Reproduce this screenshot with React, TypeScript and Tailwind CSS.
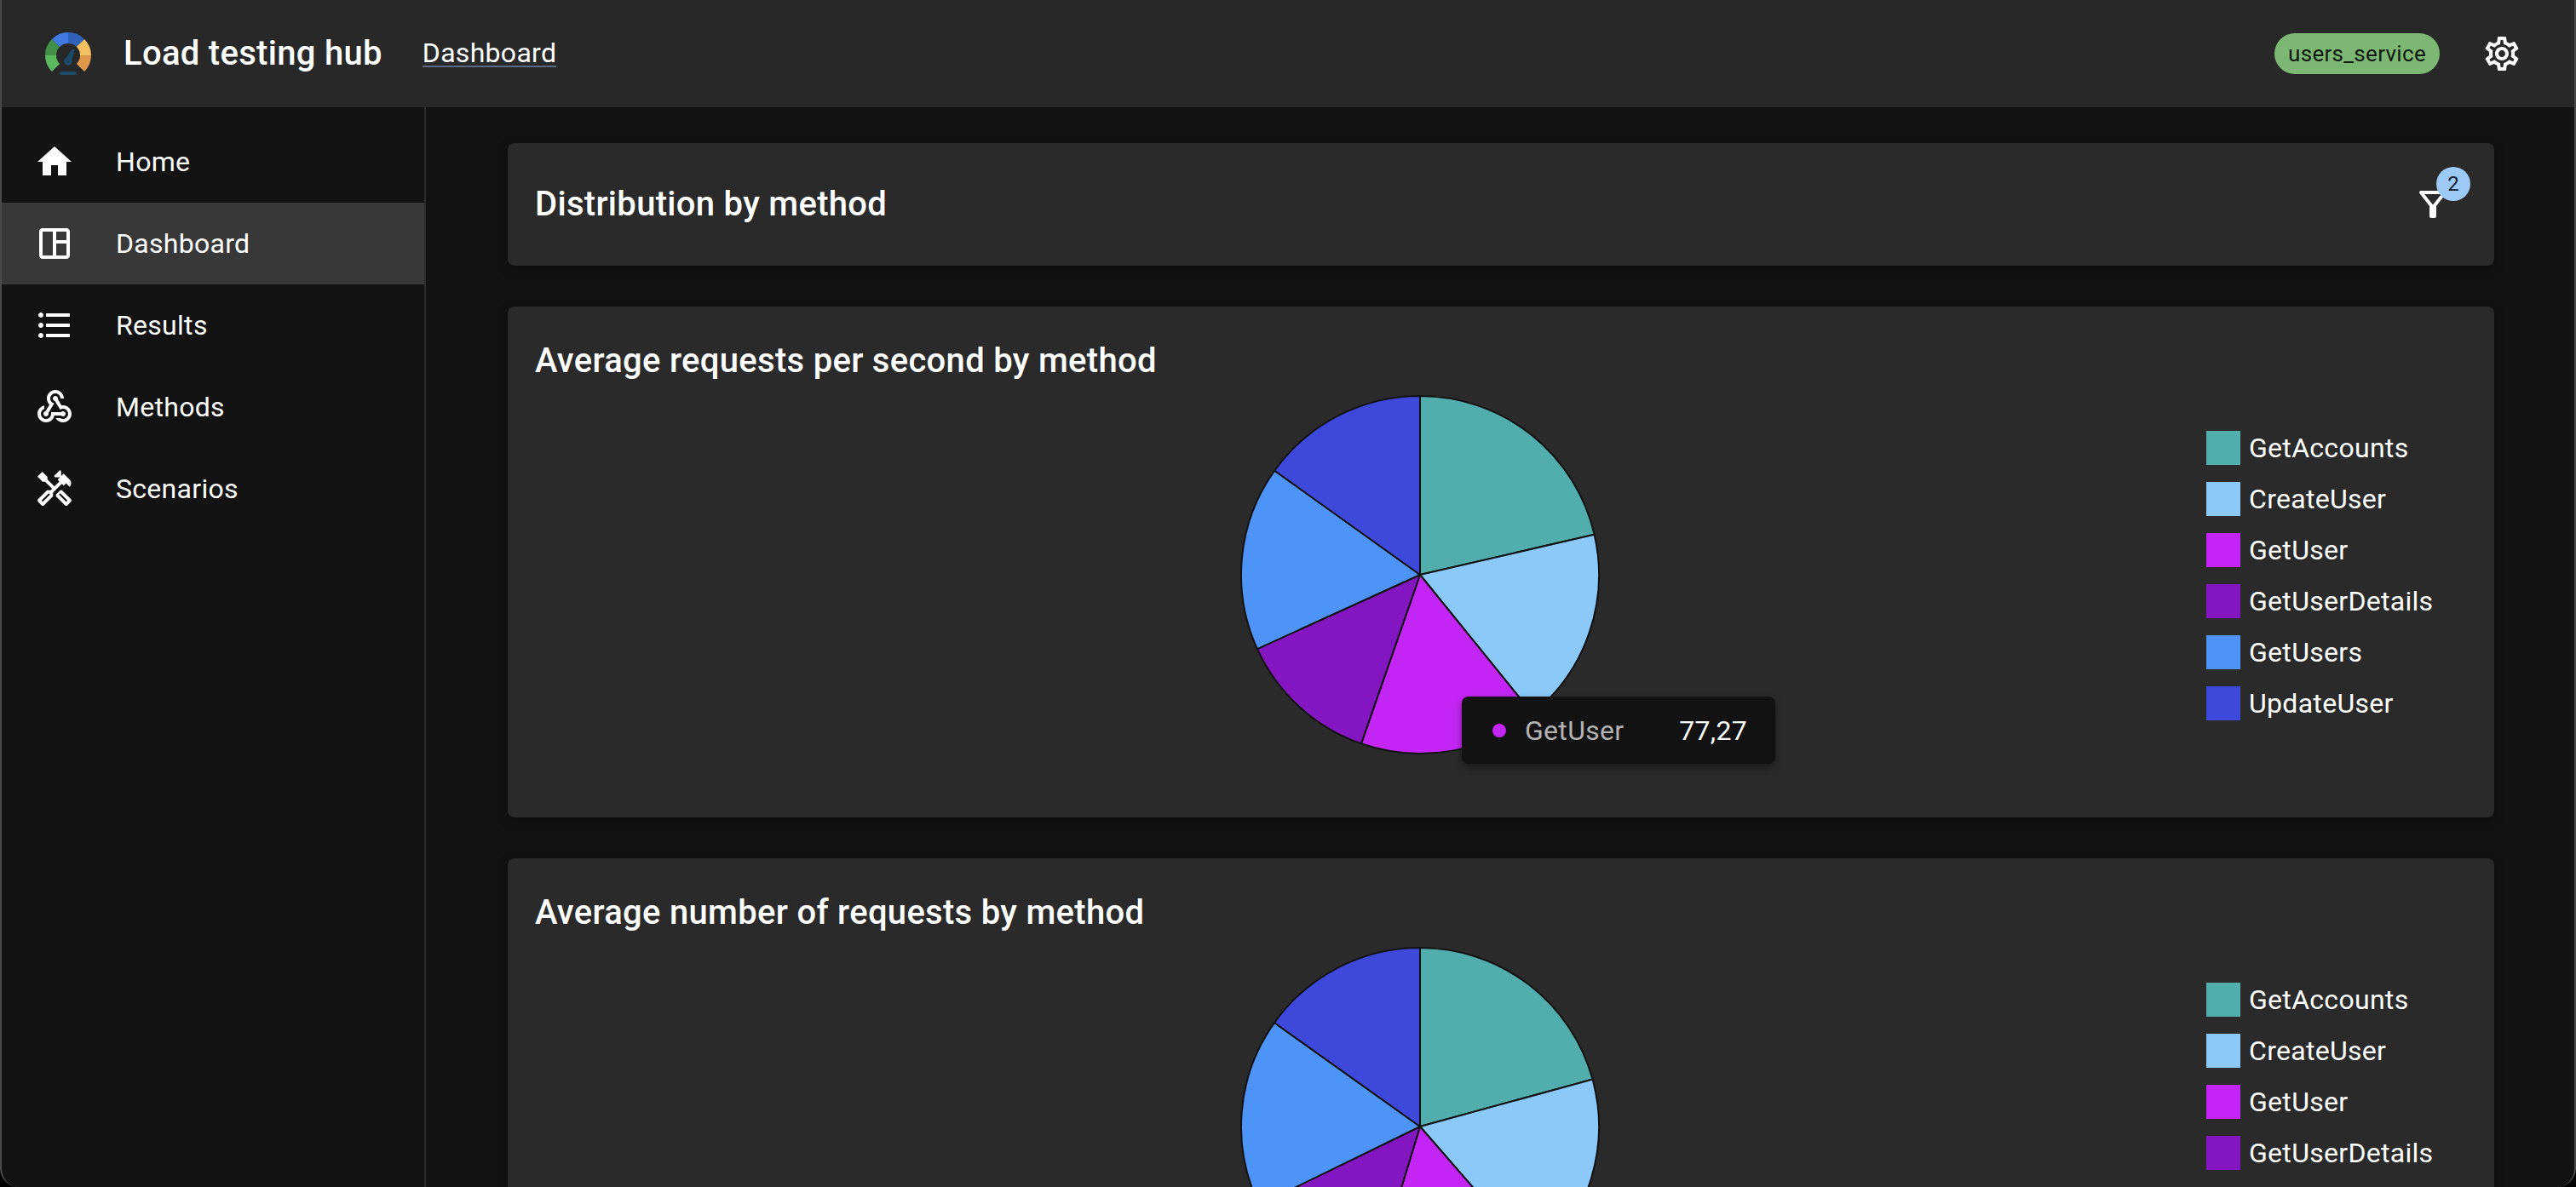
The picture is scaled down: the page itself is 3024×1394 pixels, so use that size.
import React from 'react';

const font = "font-['Roboto',sans-serif]";

const Icon: React.FC<{ d: string; className?: string }> = ({ d, className = 'w-12 h-12' }) => (
  <svg viewBox="0 0 24 24" fill="currentColor" className={`${className} shrink-0`}>
    <path d={d} />
  </svg>
);

const HOME = 'M10 20v-6h4v6h5v-8h3L12 3 2 12h3v8z';
const DASHBOARD =
  'M19 3H5c-1.1 0-2 .9-2 2v14c0 1.1.9 2 2 2h14c1.1 0 2-.9 2-2V5c0-1.1-.9-2-2-2zM5 19V5h6v14H5zm14 0h-6v-7h6v7zm0-9h-6V5h6v5z';
const LIST =
  'M4 10.5c-.83 0-1.5.67-1.5 1.5s.67 1.5 1.5 1.5 1.5-.67 1.5-1.5-.67-1.5-1.5-1.5zm0-6c-.83 0-1.5.67-1.5 1.5S3.17 7.5 4 7.5 5.5 6.83 5.5 6 4.83 4.5 4 4.5zm0 12c-.83 0-1.5.68-1.5 1.5s.68 1.5 1.5 1.5 1.5-.68 1.5-1.5-.67-1.5-1.5-1.5zM7 19h14v-2H7v2zm0-6h14v-2H7v2zm0-8v2h14V5H7z';
const WEBHOOK =
  'M10 15h5.88c.27-.31.67-.5 1.12-.5.83 0 1.5.67 1.5 1.5s-.67 1.5-1.5 1.5c-.44 0-.84-.19-1.12-.5H11.9c-.46 2.28-2.48 4-4.9 4-2.76 0-5-2.24-5-5 0-2.42 1.72-4.44 4-4.9v2.07c-1.16.41-2 1.53-2 2.83 0 1.65 1.35 3 3 3s3-1.35 3-3v-1zm2.5-11c1.65 0 3 1.35 3 3h2c0-2.76-2.24-5-5-5s-5 2.24-5 5c0 1.43.6 2.71 1.55 3.62l-2.35 3.9c-.68.14-1.2.75-1.2 1.48 0 .83.67 1.5 1.5 1.5s1.5-.67 1.5-1.5c0-.16-.02-.31-.07-.45l3.38-5.63C10.49 9.61 9.5 8.42 9.5 7c0-1.65 1.35-3 3-3zm4.5 9c-.64 0-1.23.2-1.72.54l-3.05-5.07C11.53 8.35 11 7.74 11 7c0-.83.67-1.5 1.5-1.5S14 6.17 14 7c0 .15-.02.29-.06.43l2.19 3.65c.28-.05.57-.08.87-.08 2.76 0 5 2.24 5 5s-2.24 5-5 5c-1.85 0-3.47-1.01-4.33-2.5h2.67c.48.32 1.05.5 1.66.5 1.65 0 3-1.35 3-3s-1.35-3-3-3z';
const CONSTRUCTION =
  'm21.67 18.17-5.3-5.3h-.99l-2.54 2.54v.99l5.3 5.3c.39.39 1.02.39 1.41 0l2.12-2.12c.39-.38.39-1.02 0-1.41zm-2.83 1.42-4.24-4.24.71-.71 4.24 4.24-.71.71zM17.34 10.19l1.41-1.41 2.12 2.12c1.17-1.17 1.17-3.07 0-4.24l-3.54-3.54-1.41 1.41V1.71l-.7-.71-3.54 3.54.71.71h2.83l-1.41 1.41 1.06 1.06-2.89 2.89-4.13-4.13V5.06L4.83 2.04 2 4.87 5.03 7.9h1.41l4.13 4.13-.85.85H7.6l-5.3 5.3c-.39.39-.39 1.02 0 1.41l2.12 2.12c.39.39 1.02.39 1.41 0l5.3-5.3v-2.12l5.15-5.15 1.06 1.05zm-7.98 5.15-4.24 4.24-.71-.71 4.24-4.24.71.71z';
const SETTINGS =
  'M19.43 12.98c.04-.32.07-.64.07-.98 0-.34-.03-.66-.07-.98l2.11-1.65c.19-.15.24-.42.12-.64l-2-3.46c-.09-.16-.26-.25-.44-.25-.06 0-.12.01-.17.03l-2.49 1c-.52-.4-1.08-.73-1.69-.98l-.38-2.65C14.46 2.18 14.25 2 14 2h-4c-.25 0-.46.18-.49.42l-.38 2.65c-.61.25-1.17.59-1.69.98l-2.49-1c-.06-.02-.12-.03-.18-.03-.17 0-.34.09-.43.25l-2 3.46c-.13.22-.07.49.12.64l2.11 1.65c-.04.32-.07.65-.07.98 0 .33.03.66.07.98l-2.11 1.65c-.19.15-.24.42-.12.64l2 3.46c.09.16.26.25.44.25.06 0 .12-.01.17-.03l2.49-1c.52.4 1.08.73 1.69.98l.38 2.65c.03.24.24.42.49.42h4c.25 0 .46-.18.49-.42l.38-2.65c.61-.25 1.17-.59 1.69-.98l2.49 1c.06.02.12.03.18.03.17 0 .34-.09.43-.25l2-3.46c.12-.22.07-.49-.12-.64l-2.11-1.65zm-1.98-1.71c.04.31.05.52.05.73 0 .21-.02.43-.05.73l-.14 1.13.89.7 1.08.84-.7 1.21-1.27-.51-1.04-.42-.9.68c-.43.32-.84.56-1.25.73l-1.06.43-.16 1.13-.2 1.35h-1.4l-.19-1.35-.16-1.13-1.06-.43c-.43-.18-.83-.41-1.23-.71l-.91-.7-1.06.43-1.27.51-.7-1.21 1.08-.84.89-.7-.14-1.13c-.03-.31-.05-.54-.05-.74s.02-.43.05-.73l.14-1.13-.89-.7-1.08-.84.7-1.21 1.27.51 1.04.42.9-.68c.43-.32.84-.56 1.25-.73l1.06-.43.16-1.13.2-1.35h1.39l.19 1.35.16 1.13 1.06.43c.43.18.83.41 1.23.71l.91.7 1.06-.43 1.27-.51.7 1.21-1.07.85-.89.7.14 1.13zM12 8c-2.21 0-4 1.79-4 4s1.79 4 4 4 4-1.79 4-4-1.79-4-4-4zm0 6c-1.1 0-2-.9-2-2s.9-2 2-2 2 .9 2 2-.9 2-2 2z';
const FILTER =
  'M7 6h10l-5.01 6.3L7 6zm-2.75-.39C6.27 8.2 10 13 10 13v6c0 .55.45 1 1 1h2c.55 0 1-.45 1-1v-6s3.72-4.8 5.74-7.39c.51-.66.04-1.61-.79-1.61H5.04c-.83 0-1.3.95-.79 1.61z';

const navItems = [
  { label: 'Home', icon: HOME },
  { label: 'Dashboard', icon: DASHBOARD, active: true },
  { label: 'Results', icon: LIST },
  { label: 'Methods', icon: WEBHOOK },
  { label: 'Scenarios', icon: CONSTRUCTION },
];

const methods = [
  { name: 'GetAccounts', color: '#52adad', swatch: 'bg-[#52adad]' },
  { name: 'CreateUser', color: '#8bc9fb', swatch: 'bg-[#8bc9fb]' },
  { name: 'GetUser', color: '#c326f4', swatch: 'bg-[#c326f4]' },
  { name: 'GetUserDetails', color: '#8416c1', swatch: 'bg-[#8416c1]' },
  { name: 'GetUsers', color: '#4e94f6', swatch: 'bg-[#4e94f6]' },
  { name: 'UpdateUser', color: '#3e48da', swatch: 'bg-[#3e48da]' },
];

// slice boundaries, degrees clockwise from 12 o'clock
const Pie: React.FC<{ stops: number[] }> = ({ stops }) => {
  const r = 210;
  const c = 212;
  const point = (deg: number) => {
    const a = (deg * Math.PI) / 180;
    return `${c + r * Math.sin(a)} ${c - r * Math.cos(a)}`;
  };
  return (
    <svg viewBox="0 0 424 424" className="w-[424px] h-[424px] shrink-0 mt-[7px] ml-[827px]">
      {methods.map((m, i) => {
        const from = stops[i];
        const to = stops[i + 1];
        return (
          <path
            key={m.name}
            d={`M${c} ${c}L${point(from)}A${r} ${r} 0 ${to - from > 180 ? 1 : 0} 1 ${point(to)}Z`}
            fill={m.color}
            stroke="#121212"
            strokeWidth={2}
            strokeLinejoin="round"
          />
        );
      })}
    </svg>
  );
};

// the last card runs off the page, rows below the fold are not rendered
const Legend: React.FC<{ rows: number }> = ({ rows }) => (
  <div className="ml-auto w-[306px] pt-[50px] flex flex-col gap-5">
    {methods.slice(0, rows).map((m) => (
      <div key={m.name} className="flex items-center gap-[10px] h-10">
        <span className={`w-10 h-10 shrink-0 ${m.swatch}`} />
        <span className="text-[32px] leading-10 tracking-[0.3px] text-white whitespace-nowrap">{m.name}</span>
      </div>
    ))}
  </div>
);

const ChartCard: React.FC<{ title: string; stops: number[]; rows?: number; tooltip?: boolean }> = ({
  title,
  stops,
  rows = 6,
  tooltip,
}) => (
  <section className="bg-[#2a2a2a] rounded-lg shadow-[0_4px_12px_rgba(0,0,0,0.35)] px-8 pt-8 pb-[32px] shrink-0">
    <h2 className="text-[40px] leading-[64px] font-medium tracking-[0.3px] text-white">{title}</h2>
    <div className="relative flex h-[472px]">
      <Pie stops={stops} />
      <Legend rows={rows} />
      {tooltip && (
        <div className="absolute left-[1088px] top-[362px] w-[368px] h-[79px] bg-[#121212] rounded-lg shadow-[0_4px_8px_rgba(0,0,0,0.4)] flex items-center pl-[36px] pr-[33px] text-[32px] tracking-[0.3px]">
          <span className="w-4 h-4 rounded-full bg-[#c326f4]" />
          <span className="ml-[22px] text-[#b3b3b3]">GetUser</span>
          <span className="ml-auto text-white">77,27</span>
        </div>
      )}
    </div>
  </section>
);

const logoBands = [
  { from: -135, to: -90, color: '#5cb85c' },
  { from: -90, to: -45, color: '#43904a' },
  { from: -45, to: 0, color: '#3f7be0' },
  { from: 0, to: 45, color: '#2f62b8' },
  { from: 45, to: 90, color: '#f5c060' },
  { from: 90, to: 135, color: '#de9a4a' },
];

const Logo: React.FC = () => {
  const at = (deg: number) => {
    const a = (deg * Math.PI) / 180;
    return `${27 + 20.5 * Math.sin(a)} ${27 - 20.5 * Math.cos(a)}`;
  };
  return (
    <svg viewBox="0 0 54 50" className="w-[54px] h-[50px] shrink-0">
      <g fill="none" strokeWidth={13}>
        {logoBands.map((b) => (
          <path key={b.from} d={`M${at(b.from)}A20.5 20.5 0 0 1 ${at(b.to)}`} stroke={b.color} />
        ))}
      </g>
      <path d="M32 19.5 L34.5 20.5 L31 34 L23 32 Z" fill="#1c4a68" />
      <circle cx="27" cy="34" r="4.7" fill="#1c4a68" />
      <rect x="17" y="46" width="20" height="4" rx="2" fill="#1c4a68" />
    </svg>
  );
};

export default function App() {
  return (
    <div className="bg-black">
      <div className={`${font} h-screen overflow-hidden flex flex-col bg-[#121212] border-x-2 border-[#4a4a4a] rounded-b-[22px] text-white`}>
        <header className="h-[126px] shrink-0 bg-[#282828] flex items-center pl-[51px] pr-[61px]">
          <Logo />
          <span className="ml-[38px] text-[40px] font-medium tracking-[0.3px]">Load testing hub</span>
          <span className="ml-[47px] text-[32px] leading-[30px] border-b-2 border-[#5a6a80] tracking-[0.3px]">Dashboard</span>
          <span className="ml-auto h-12 px-4 rounded-full bg-[#7cb874] text-[#101810] text-[26px] leading-[48px] tracking-[0.3px]">users_service</span>
          <Icon d={SETTINGS} className="w-12 h-12 ml-[49px]" />
        </header>
        <div className="flex flex-1 min-h-0">
          <aside className="w-[498px] shrink-0 border-r-2 border-[#2a2a2a] pt-4">
            {navItems.map((item) => (
              <div
                key={item.label}
                className={`h-24 flex items-center pl-[38px] text-[32px] tracking-[0.3px] ${item.active ? 'bg-[#383838]' : ''}`}
              >
                <Icon d={item.icon} />
                <span className="ml-[48px]">{item.label}</span>
              </div>
            ))}
          </aside>
          <main className="flex-1 min-w-0 pl-[96px] pr-[94px] pt-[42px] flex flex-col gap-12 overflow-hidden">
            <section className="bg-[#2a2a2a] rounded-lg shadow-[0_4px_12px_rgba(0,0,0,0.35)] h-[144px] px-8 flex items-center justify-between shrink-0">
              <h1 className="text-[40px] font-medium tracking-[0.3px]">Distribution by method</h1>
              <div className="relative mr-4">
                <Icon d={FILTER} />
                <span className="absolute -top-5 -right-5 w-10 h-10 rounded-full bg-[#9cc9f5] text-[#14202c] text-[24px] flex items-center justify-center">2</span>
              </div>
            </section>
            <ChartCard title="Average requests per second by method" stops={[0, 77, 141, 199.2, 245.5, 305.6, 360]} tooltip />
            <ChartCard title="Average number of requests by method" stops={[0, 74.7, 139, 197, 244, 305.5, 360]} rows={4} />
          </main>
        </div>
      </div>
    </div>
  );
}
